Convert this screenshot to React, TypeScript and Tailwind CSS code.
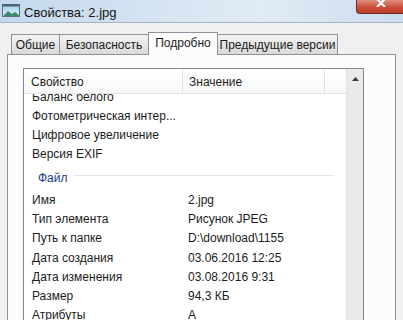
import React from "react";

const topRows = [
  { name: "Баланс белого", value: "" },
  { name: "Фотометрическая интер...", value: "" },
  { name: "Цифровое увеличение", value: "" },
  { name: "Версия EXIF", value: "" },
];

const fileRows = [
  { name: "Имя", value: "2.jpg" },
  { name: "Тип элемента", value: "Рисунок JPEG" },
  { name: "Путь к папке", value: "D:\\download\\1155" },
  { name: "Дата создания", value: "03.06.2016 12:25" },
  { name: "Дата изменения", value: "03.08.2016 9:31" },
  { name: "Размер", value: "94,3 КБ" },
  { name: "Атрибуты", value: "A" },
];

function PictureIcon() {
  return (
    <svg width="18" height="13" viewBox="0 0 18 13">
      <defs>
        <linearGradient id="sky" x1="0" y1="0" x2="0" y2="1">
          <stop offset="0" stopColor="#9fd0ee" />
          <stop offset="1" stopColor="#e2f2fa" />
        </linearGradient>
      </defs>
      <rect x="0.5" y="0.5" width="17" height="12" fill="url(#sky)" stroke="#5a6f80" />
      <rect x="0.5" y="0.5" width="17" height="2" fill="#4b6275" />
      <path d="M1 12 L6 7 L10 10 L13 8 L17 11 L17 12 Z" fill="#3f8a6a" />
    </svg>
  );
}

function Row({ name, value, h }: { name: string; value: string; h: string }) {
  return (
    <div className={`flex items-center ${h}`}>
      <div className="w-[159px] pl-[8px] whitespace-nowrap overflow-hidden">{name}</div>
      <div className="pl-[5px] whitespace-nowrap">{value}</div>
    </div>
  );
}

const tabBg =
  "h-[20px] border-t border-[#8e9199] bg-[linear-gradient(180deg,#f4f4f4_0%,#e6e6e6_50%,#dadada_100%)] flex items-center justify-center whitespace-nowrap";

export default function App() {
  return (
    <div
      className="w-[403px] h-[320px] overflow-hidden flex flex-col bg-[#f0f0f0] text-[12px] text-[#1c1c1c]"
      style={{ fontFamily: '"Liberation Sans", Arial, sans-serif' }}
    >
      {/* title bar */}
      <div className="h-[23px] shrink-0 flex items-start border-b border-[#a4b5c8] bg-[linear-gradient(90deg,#c4d8ed_0%,#d6e4f2_40%,#e1ebf5_65%,#cbdcee_100%)]">
        <div className="mt-[4px] ml-[2px]">
          <PictureIcon />
        </div>
        <div className="ml-[4px] mt-[3px] text-[13px] text-[#151515]">Свойства: 2.jpg</div>
        <div className="ml-auto mr-[-2px] w-[49px] h-[14px] rounded-bl-[4px] border border-t-0 border-[#6e2a22] bg-[linear-gradient(180deg,#e0907e_0%,#c94a34_60%,#b8402c_100%)] flex justify-center">
          <svg width="10" height="8" viewBox="0 0 10 8" className="mt-[-1px]">
            <path d="M1 0 L5 4 L9 0 M1 8 L5 4 L9 8" stroke="#ffffff" strokeWidth="2.2" fill="none" />
          </svg>
        </div>
      </div>

      {/* body */}
      <div className="flex-1 pl-[7px] pt-[9px]">
        {/* tabs */}
        <div className="flex items-end h-[22px] pl-[4px]">
          <div className={`w-[48px] border-l ${tabBg}`}>Общие</div>
          <div className={`w-[89px] border-l ${tabBg}`}>Безопасность</div>
          <div className="relative z-10 w-[70px] h-[23px] mb-[-1px] border-l border-t border-r border-[#8e9199] bg-[#fcfcfc] flex items-center justify-center pb-[3px] whitespace-nowrap">
            Подробно
          </div>
          <div className={`w-[120px] border-r ${tabBg}`}>Предыдущие версии</div>
        </div>

        {/* panel */}
        <div className="w-[389px] h-[300px] border border-[#8e9199] bg-[#fcfcfc] pl-[15px] pt-[13px]">
          <div className="w-[341px] h-[300px] border border-[#828790] bg-white flex">
            <div className="w-[322px] flex flex-col">
              {/* header */}
              <div className="h-[25px] shrink-0 flex border-b border-[#e5e5e5] bg-[linear-gradient(180deg,#ffffff_0%,#f7f8f9_100%)]">
                <div className="w-[159px] border-r border-[#e2e2e2] pl-[7px] pt-[2px] flex items-center">Свойство</div>
                <div className="w-[142px] border-r border-[#e2e2e2] pl-[6px] pt-[2px] flex items-center">Значение</div>
                <div className="flex-1" />
              </div>
              {/* rows */}
              <div className="flex-1 overflow-hidden">
                <div className="mt-[-6.5px]">
                  {topRows.map((r) => (
                    <Row key={r.name} name={r.name} value={r.value} h="h-[19px]" />
                  ))}
                  <div className="h-[27px] flex items-center pl-[14px] pr-[12px] pt-[2px]">
                    <span className="text-[#1e3a8c]">Файл</span>
                    <div className="flex-1 ml-[6px] mb-[6px] h-px bg-[#e3e6ea]" />
                  </div>
                  {fileRows.map((r) => (
                    <Row key={r.name} name={r.name} value={r.value} h="h-[19.2px]" />
                  ))}
                </div>
              </div>
            </div>
            {/* scrollbar */}
            <div className="w-[17px] bg-[#eaeaea] border-l border-[#e2e2e2] flex justify-center pt-[8px]">
              <svg width="7" height="4" viewBox="0 0 7 4">
                <path d="M0 4 L3.5 0 L7 4 Z" fill="#3a3a3a" />
              </svg>
            </div>
          </div>
        </div>
      </div>
    </div>
  );
}
